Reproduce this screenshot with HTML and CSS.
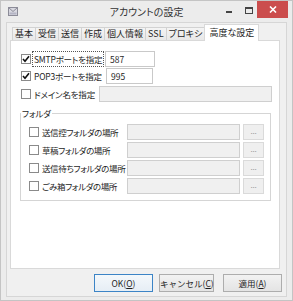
FILE: index.html
```html
<!DOCTYPE html>
<html lang="ja">
<head>
    <meta charset="UTF-8">
    <title>アカウントの設定</title>
    <link rel="stylesheet" href="styles.css">
</head>
<body>
    <div class="window">
        <div class="titlebar">
            <div class="tb-left">
                <svg class="app-icon" width="10" height="9" viewBox="0 0 10 9">
                    <rect x="0.5" y="0.5" width="9" height="8" fill="#d8d8e0" stroke="#8c8c98"/>
                    <path d="M0.5 0.5 L5 4.5 L9.5 0.5" fill="none" stroke="#8c8c98"/>
                    <rect x="1.5" y="5.5" width="7" height="2" fill="#b4b4c4"/>
                </svg>
            </div>
            <div class="tb-title">アカウントの設定</div>
            <div class="tb-right">
                <span class="ctl ctl-min"></span>
                <span class="ctl ctl-max"></span>
                <span class="ctl ctl-close">
                    <svg width="8" height="7" viewBox="0 0 8 7">
                        <path d="M1 0.5 L7 6.5 M7 0.5 L1 6.5" stroke="#fff" stroke-width="1.6"/>
                    </svg>
                </span>
            </div>
        </div>

        <div class="client">
            <div class="tabs">
                <div class="tab">基本</div>
                <div class="tab">受信</div>
                <div class="tab">送信</div>
                <div class="tab">作成</div>
                <div class="tab">個人情報</div>
                <div class="tab">SSL</div>
                <div class="tab">プロキシ</div>
                <div class="tab active">高度な設定</div>
            </div>

            <div class="panel">
                <div class="row row-smtp">
                    <span class="cb checked"><svg width="8" height="8" viewBox="0 0 8 8"><path d="M1 4 L3 6.2 L7 1.2" fill="none" stroke="#111" stroke-width="1.6"/></svg></span>
                    <span class="lbl focus">SMTPポートを指定</span>
                    <span class="field">587</span>
                </div>
                <div class="row row-pop">
                    <span class="cb checked"><svg width="8" height="8" viewBox="0 0 8 8"><path d="M1 4 L3 6.2 L7 1.2" fill="none" stroke="#111" stroke-width="1.6"/></svg></span>
                    <span class="lbl">POP3ポートを指定</span>
                    <span class="field">995</span>
                </div>
                <div class="row row-domain">
                    <span class="cb"></span>
                    <span class="lbl">ドメイン名を指定</span>
                    <span class="field disabled"></span>
                </div>

                <fieldset class="group">
                    <legend>フォルダ</legend>
                    <div class="frow">
                        <span class="cb"></span>
                        <span class="flbl">送信控フォルダの場所</span>
                        <span class="field disabled"></span>
                        <span class="dots">...</span>
                    </div>
                    <div class="frow">
                        <span class="cb"></span>
                        <span class="flbl">草稿フォルダの場所</span>
                        <span class="field disabled"></span>
                        <span class="dots">...</span>
                    </div>
                    <div class="frow">
                        <span class="cb"></span>
                        <span class="flbl">送信待ちフォルダの場所</span>
                        <span class="field disabled"></span>
                        <span class="dots">...</span>
                    </div>
                    <div class="frow">
                        <span class="cb"></span>
                        <span class="flbl">ごみ箱フォルダの場所</span>
                        <span class="field disabled"></span>
                        <span class="dots">...</span>
                    </div>
                </fieldset>
            </div>

            <div class="buttons">
                <button class="btn btn-ok">OK(<u>O</u>)</button>
                <button class="btn btn-cancel">キャンセル(<u>C</u>)</button>
                <button class="btn btn-apply">適用(<u>A</u>)</button>
            </div>
        </div>
    </div>
</body>
</html>
```

FILE: styles.css
```css
* {
    box-sizing: border-box;
}
body {
    margin: 0;
    font-family: "Noto Sans CJK JP", "Noto Sans", sans-serif;
    font-size: 8.5px;
    font-feature-settings: "palt";
    letter-spacing: -0.2px;
    color: #1e1e1e;
    background: #ffffff;
}
.window {
    width: 293px;
    height: 301px;
    border: 1px solid #c4c4c4;
    background: #ececec;
    display: flex;
    flex-direction: column;
}
.titlebar {
    height: 21px;
    display: grid;
    grid-template-columns: 1fr auto 1fr;
}
.tb-left {
    padding: 6px 0 0 7px;
}
.app-icon {
    display: block;
}
.tb-title {
    font-size: 10px;
    letter-spacing: 0;
    color: #333;
    line-height: 21px;
}
.tb-right {
    display: flex;
    justify-content: flex-end;
    align-items: flex-start;
    padding-right: 4px;
}
.ctl-min {
    width: 6px;
    height: 2px;
    background: #444;
    margin-top: 10px;
}
.ctl-max {
    width: 8px;
    height: 7px;
    border: 1px solid #444;
    border-top-width: 2px;
    margin: 6px 4px 0 13px;
}
.ctl-close {
    width: 31px;
    height: 17px;
    background: #cb4d4d;
    display: flex;
    align-items: center;
    justify-content: center;
}
.client {
    margin: 0 5px 3px 5px;
    height: 275px;
    background: #f0f0f0;
    border: 1px solid #d6d6d6;
    display: flex;
    flex-direction: column;
    padding: 0 0 0 3px;
}
.tabs {
    height: 17px;
    display: flex;
    align-items: flex-end;
    padding-left: 2px;
}
.tab {
    height: 13px;
    line-height: 11px;
    padding: 0 2px;
    border: 1px solid #d2d2d2;
    border-bottom: none;
    margin-right: -1px;
    background: linear-gradient(#f4f4f4, #e8e8e8);
    white-space: nowrap;
    font-size: 9px;
    letter-spacing: 0;
}
.tab.active {
    height: 17px;
    line-height: 15px;
    margin: 0 0 -1px 0;
    padding: 0 4px;
    background: #ffffff;
    border-color: #d9d9d9;
    position: relative;
    z-index: 1;
}
.panel {
    width: 270px;
    height: 229px;
    background: #ffffff;
    border: 1px solid #d9d9d9;
    padding: 10px 0 0 9px;
}
.row {
    display: flex;
    align-items: center;
    height: 16px;
    padding-left: 1px;
}
.row-pop {
    margin-top: 1px;
}
.row-domain {
    margin-top: 2px;
}
.cb {
    width: 10px;
    height: 10px;
    border: 1px solid #8a8a8a;
    background: #fff;
    display: flex;
    align-items: center;
    justify-content: center;
    flex: none;
}
.lbl {
    margin-left: 1px;
    width: 72px;
    height: 16px;
    line-height: 14px;
    padding: 0 1px;
    border: 1px dotted transparent;
    white-space: nowrap;
}
.lbl.focus {
    border-color: #555;
}
.field {
    height: 16px;
    line-height: 14px;
    border: 1px solid #c9c9c9;
    background: #fff;
    padding: 0 4px;
    letter-spacing: 0;
}
.row-smtp .field {
    margin-left: 1px;
    width: 50px;
}
.row-pop .field {
    margin-left: 2px;
    width: 47px;
}
.row-domain .lbl {
    width: 67px;
}
.row-domain .field {
    width: 173px;
}
.field.disabled {
    background: #f0f0f0;
    border-color: #cfcfcf;
}
.group {
    margin: 6px 0 0 0;
    width: 251px;
    border: 1px solid #d5d5d5;
    padding: 5px 6px 6px 8px;
}
.group legend {
    padding: 0 1px;
    margin-left: -8px;
    line-height: 11px;
    height: 11px;
}
.frow {
    display: flex;
    align-items: center;
    height: 16px;
    margin-bottom: 2px;
}
.frow:last-child {
    margin-bottom: 0;
}
.flbl {
    margin-left: 3px;
    width: 85px;
    white-space: nowrap;
    letter-spacing: -0.4px;
}
.frow .field {
    width: 113px;
}
.dots {
    margin-left: 3px;
    width: 21px;
    height: 16px;
    border: 1px solid #dadada;
    background: #efefef;
    color: #9a9a9a;
    text-align: center;
    line-height: 11px;
    font-size: 8px;
}
.buttons {
    display: flex;
    justify-content: flex-end;
    margin-top: 5px;
    padding-right: 4px;
}
.btn {
    height: 18px;
    font-family: inherit;
    font-size: 8.5px;
    letter-spacing: 0;
    white-space: nowrap;
    color: #1e1e1e;
    border: 1px solid #adadad;
    background: linear-gradient(#f2f2f2, #e4e4e4);
    padding: 0;
}
.btn-ok {
    width: 59px;
    border-color: #3c84c6;
    background: linear-gradient(#f4f8fb, #e6eef5);
}
.btn-cancel {
    width: 55px;
    margin-left: 6px;
}
.btn-apply {
    width: 59px;
    margin-left: 9px;
}
```
